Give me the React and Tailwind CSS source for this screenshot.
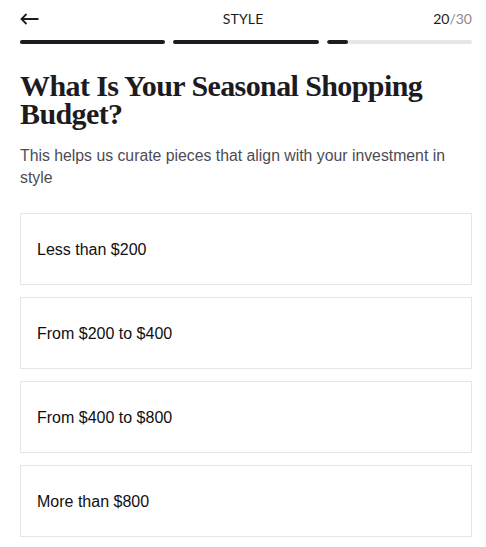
const options = ["Less than $200", "From $200 to $400", "From $400 to $800", "More than $800"];

export default function App() {
  return (
    <div className="min-h-screen bg-white pl-5 pr-[14px] font-['Liberation_Sans',Arial,sans-serif] text-[#1c1b22]">
      <div className="flex items-center justify-between pt-[9px] h-[28px] font-['Lato','Liberation_Sans',sans-serif]">
        <svg width="19" height="12" viewBox="0 0 19 12" fill="none" stroke="#1c1b22" strokeWidth="1.8">
          <path d="M18.5 6H1.5M6.5 1L1.5 6l5 5" />
        </svg>
        <span className="text-[14px] tracking-[0.2px] pl-[14px]">STYLE</span>
        <span className="text-[14px]">
          20<span className="text-[#8a8a8a]">/30</span>
        </span>
      </div>

      <div className="mt-[12px] flex gap-2">
        <div className="h-[4px] flex-1 rounded-full bg-[#1c1b22]" />
        <div className="h-[4px] flex-1 rounded-full bg-[#1c1b22]" />
        <div className="h-[4px] flex-1 rounded-full bg-[#e6e6e6] overflow-hidden">
          <div className="h-full w-[15%] rounded-full bg-[#1c1b22]" />
        </div>
      </div>

      <h1 className="mt-[28px] font-['Liberation_Serif',serif] font-bold text-[30px] leading-[28px] tracking-[-0.6px] text-[#1c1b22]">
        What Is Your Seasonal Shopping Budget?
      </h1>

      <p className="mt-[17px] text-[15.8px] leading-[22px] text-[#4d4b55] pr-4">
        This helps us curate pieces that align with your investment in style
      </p>

      <div className="mt-[24px] flex flex-col gap-3">
        {options.map((o) => (
          <button
            key={o}
            className="h-[72px] border border-[#e6e6e6] bg-white px-4 pt-[2px] text-left text-[16px] text-[#0f0f12]"
          >
            {o}
          </button>
        ))}
      </div>
    </div>
  );
}
